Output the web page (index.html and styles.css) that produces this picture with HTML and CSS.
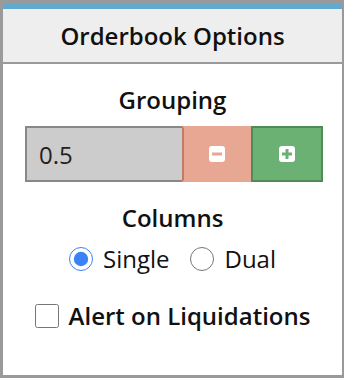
FILE: index.html
```html
<!DOCTYPE html>
<html lang="en">
<head>
    <meta charset="UTF-8">
    <meta name="viewport" content="width=device-width, initial-scale=1.0">
    <title>Orderbook Options</title>
    <link rel="stylesheet" href="styles.css">
</head>
<body>
    <div class="panel">
        <div class="panel-header">Orderbook Options</div>
        <div class="panel-body">
            <div class="section-title">Grouping</div>
            <div class="grouping">
                <input class="grouping-input" type="text" value="0.5">
                <button class="step-button minus" type="button">
                    <svg width="16" height="16" viewBox="0 0 16 16"><rect x="0" y="0" width="16" height="16" rx="3" fill="#fff"/><rect x="3" y="6.5" width="10" height="3" fill="#e8a793"/></svg>
                </button>
                <button class="step-button plus" type="button">
                    <svg width="16" height="16" viewBox="0 0 16 16"><rect x="0" y="0" width="16" height="16" rx="3" fill="#fff"/><rect x="3" y="6.5" width="10" height="3" fill="#6cb174"/><rect x="6.5" y="3" width="3" height="10" fill="#6cb174"/></svg>
                </button>
            </div>
            <div class="section-title columns-title">Columns</div>
            <div class="radio-row">
                <label class="radio"><input type="radio" name="columns" checked> Single</label>
                <label class="radio"><input type="radio" name="columns"> Dual</label>
            </div>
            <label class="check"><input type="checkbox"> Alert on Liquidations</label>
        </div>
    </div>
</body>
</html>
```

FILE: styles.css
```css
body {
    margin: 0;
    font-family: "Open Sans", "Noto Sans", sans-serif;
    color: #111;
}

.panel {
    width: 344px;
    height: 378px;
    box-sizing: border-box;
    border: 3px solid #9a9a9a;
    border-right-width: 2px;
    background: #fff;
}

.panel-header {
    height: 53px;
    border-top: 6px solid #62aacd;
    border-bottom: 2px solid #9a9a9a;
    background: #eeeeee;
    font-size: 24px;
    font-weight: 600;
    display: flex;
    align-items: center;
    justify-content: center;
}

.panel-body {
    display: flex;
    flex-direction: column;
    align-items: center;
    padding-top: 20px;
}

.section-title {
    font-size: 24px;
    font-weight: 600;
    line-height: 32px;
}

.grouping {
    display: flex;
    width: 298px;
    height: 56px;
    margin-top: 10px;
    margin-left: 3px;
}

.grouping-input {
    width: 157px;
    box-sizing: border-box;
    border: 2px solid #888;
    border-right: none;
    background: #cccccc;
    font-family: inherit;
    font-size: 24px;
    padding: 0 12px;
    color: #222;
    outline: none;
}

.step-button {
    display: flex;
    align-items: center;
    justify-content: center;
    border: 2px solid;
    padding: 0;
    cursor: pointer;
}

.minus {
    width: 69px;
    background: #e8a793;
    border-color: #e8a793;
    border-left-color: #c57a66;
}

.plus {
    width: 72px;
    background: #6cb174;
    border-color: #4f8a59;
}

.columns-title {
    margin-top: 20px;
}

.radio-row {
    display: flex;
    gap: 21px;
    margin-top: 9px;
    line-height: 32px;
}

.radio, .check {
    display: flex;
    align-items: center;
    font-size: 24px;
    line-height: 32px;
}

.radio input {
    width: 24px;
    height: 24px;
    margin: 0 10px 0 0;
    accent-color: #3b82f6;
}

.check {
    font-weight: 600;
    margin-top: 25px;
}

.check input {
    width: 24px;
    height: 24px;
    margin: 0 10px 0 0;
}
```
